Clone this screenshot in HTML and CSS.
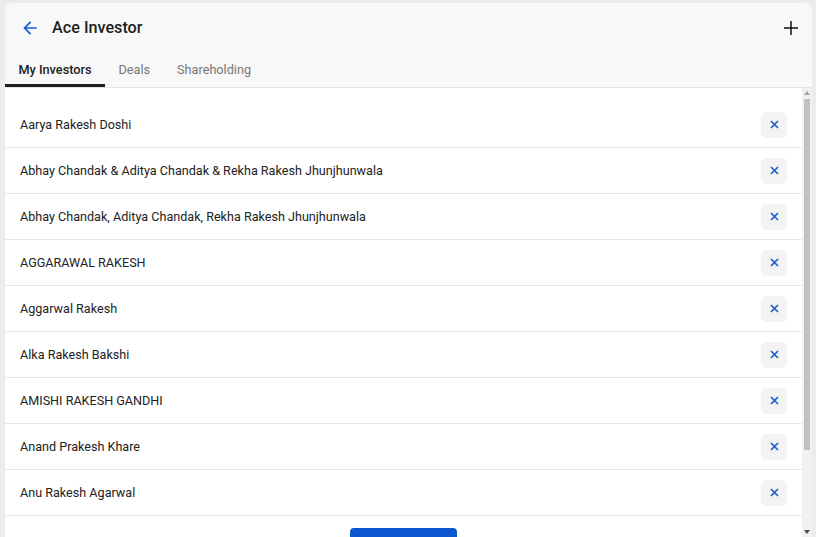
FILE: index.html
```html
<!DOCTYPE html>
<html>
<head>
<meta charset="utf-8">
<link rel="stylesheet" href="styles.css">
</head>
<body>
<div class="card">
  <header class="header">
    <div class="titlebar">
      <button class="icon-btn back" aria-label="Back">
        <svg width="20" height="20" viewBox="0 0 24 24"><path d="M20 11H7.83l5.59-5.59L12 4l-8 8 8 8 1.41-1.41L7.83 13H20v-2z" fill="#1a5fd0"/></svg>
      </button>
      <h1 class="title">Ace Investor</h1>
      <button class="icon-btn plus" aria-label="Add">
        <svg width="16" height="16" viewBox="0 0 16 16"><path d="M8 1v14M1 8h14" stroke="#111" stroke-width="1.5"/></svg>
      </button>
    </div>
    <nav class="tabs">
      <span class="tab active">My Investors</span>
      <span class="tab">Deals</span>
      <span class="tab">Shareholding</span>
    </nav>
  </header>
  <div class="list">
    <div class="list-content">
      <ul class="rows">
        <li class="row"><span>Aarya Rakesh Doshi</span><button class="remove" aria-label="Remove"><svg width="9" height="9" viewBox="0 0 9 9"><path d="M1 1l7 7M8 1L1 8" stroke="#1a5fd0" stroke-width="1.7"/></svg></button></li>
        <li class="row"><span>Abhay Chandak &amp; Aditya Chandak &amp; Rekha Rakesh Jhunjhunwala</span><button class="remove" aria-label="Remove"><svg width="9" height="9" viewBox="0 0 9 9"><path d="M1 1l7 7M8 1L1 8" stroke="#1a5fd0" stroke-width="1.7"/></svg></button></li>
        <li class="row"><span>Abhay Chandak, Aditya Chandak, Rekha Rakesh Jhunjhunwala</span><button class="remove" aria-label="Remove"><svg width="9" height="9" viewBox="0 0 9 9"><path d="M1 1l7 7M8 1L1 8" stroke="#1a5fd0" stroke-width="1.7"/></svg></button></li>
        <li class="row"><span>AGGARAWAL RAKESH</span><button class="remove" aria-label="Remove"><svg width="9" height="9" viewBox="0 0 9 9"><path d="M1 1l7 7M8 1L1 8" stroke="#1a5fd0" stroke-width="1.7"/></svg></button></li>
        <li class="row"><span>Aggarwal Rakesh</span><button class="remove" aria-label="Remove"><svg width="9" height="9" viewBox="0 0 9 9"><path d="M1 1l7 7M8 1L1 8" stroke="#1a5fd0" stroke-width="1.7"/></svg></button></li>
        <li class="row"><span>Alka Rakesh Bakshi</span><button class="remove" aria-label="Remove"><svg width="9" height="9" viewBox="0 0 9 9"><path d="M1 1l7 7M8 1L1 8" stroke="#1a5fd0" stroke-width="1.7"/></svg></button></li>
        <li class="row"><span>AMISHI RAKESH GANDHI</span><button class="remove" aria-label="Remove"><svg width="9" height="9" viewBox="0 0 9 9"><path d="M1 1l7 7M8 1L1 8" stroke="#1a5fd0" stroke-width="1.7"/></svg></button></li>
        <li class="row"><span>Anand Prakesh Khare</span><button class="remove" aria-label="Remove"><svg width="9" height="9" viewBox="0 0 9 9"><path d="M1 1l7 7M8 1L1 8" stroke="#1a5fd0" stroke-width="1.7"/></svg></button></li>
        <li class="row"><span>Anu Rakesh Agarwal</span><button class="remove" aria-label="Remove"><svg width="9" height="9" viewBox="0 0 9 9"><path d="M1 1l7 7M8 1L1 8" stroke="#1a5fd0" stroke-width="1.7"/></svg></button></li>
      </ul>
      <div class="actions">
        <button class="primary"></button>
      </div>
    </div>
    <div class="scrollbar" aria-hidden="true">
      <div class="sb-btn"><svg width="6" height="4" viewBox="0 0 6 4"><path d="M3 0L6 4H0z" fill="#a3a3a3"/></svg></div>
      <div class="sb-track"><div class="sb-thumb"></div></div>
      <div class="sb-btn"><svg width="6" height="4" viewBox="0 0 6 4"><path d="M0 0H6L3 4z" fill="#505050"/></svg></div>
    </div>
  </div>
</div>
</body>
</html>
```
FILE: styles.css
```css
* { box-sizing: border-box; }
html, body { margin: 0; padding: 0; height: 100%; overflow: hidden; }
body {
  background: #ececec;
  font-family: Roboto, "Noto Sans", sans-serif;
  color: #222;
  padding: 3px 4px 0 5px;
}
.card {
  background: #f8f8f8;
  border-radius: 8px 8px 0 0;
  height: 534px;
  display: flex;
  flex-direction: column;
  overflow: hidden;
}
.header {
  border-bottom: 1px solid #e4e4e4;
}
.titlebar {
  display: flex;
  align-items: center;
  height: 49px;
  padding: 0 11px 0 14px;
}
.icon-btn {
  background: none;
  border: 0;
  padding: 0;
  display: flex;
  align-items: center;
  justify-content: center;
  cursor: pointer;
}
.back { width: 22px; height: 22px; margin-right: 11px; margin-top: 1px; }
.plus { width: 20px; height: 20px; margin-left: auto; }
.title {
  margin: 0;
  font-size: 16.2px;
  font-weight: 500;
  color: #1e1e1e;
}
.tabs {
  display: flex;
  height: 35px;
}
.tab {
  padding: 3px 13.5px 0;
  font-size: 12.7px;
  color: #777;
  display: flex;
  align-items: center;
  border-bottom: 3px solid transparent;
}
.tab.active {
  color: #222;
  font-weight: 500;
  border-bottom-color: #1e1e1e;
}
.list {
  flex: 1;
  min-height: 0;
  display: flex;
  background: #fff;
}
.list-content {
  flex: 1;
  overflow: hidden;
}
.rows {
  list-style: none;
  margin: 0;
  padding: 14px 0 0;
}
.row {
  display: flex;
  align-items: center;
  justify-content: space-between;
  height: 46px;
  padding: 0 15px;
  font-size: 12.6px;
  color: #222;
  border-bottom: 1px solid #e6e6e6;
}
.remove {
  width: 26px;
  height: 26px;
  border: 0;
  border-radius: 5px;
  background: #f3f3f3;
  padding: 0;
  cursor: pointer;
  display: flex;
  align-items: center;
  justify-content: center;
}
.actions {
  display: flex;
  justify-content: center;
  padding: 12px 0 40px;
}
.primary {
  width: 107px;
  height: 36px;
  border: 0;
  border-radius: 4px;
  background: #0b57d0;
}
.scrollbar {
  width: 10px;
  display: flex;
  flex-direction: column;
  background: #f1f1f1;
}
.sb-btn {
  height: 10px;
  display: flex;
  align-items: center;
  justify-content: center;
}
.sb-track {
  flex: 1;
  padding: 1px 2px;
}
.sb-thumb {
  height: 351px;
  background: #c1c1c1;
}
```
